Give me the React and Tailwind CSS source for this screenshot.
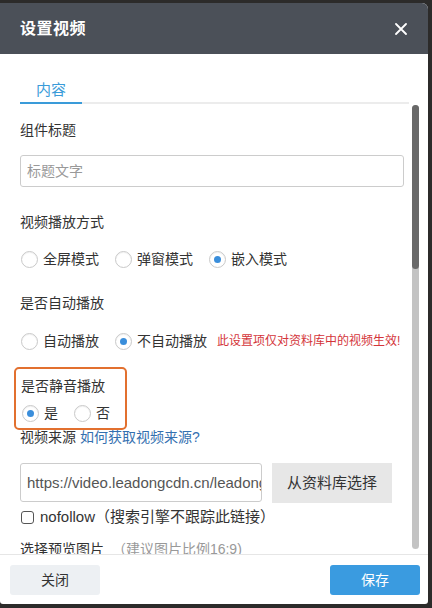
import React from "react";

const Radio = ({ checked, label }) => (
    <label className="flex items-center h-5">
        <span className="w-[17px] h-[17px] rounded-full border border-[#c9c9c9] bg-white shadow-[inset_0_1px_1px_rgba(0,0,0,0.06)] flex items-center justify-center">
            {checked && <span className="w-[7px] h-[7px] rounded-full bg-[#3a8edb]" />}
        </span>
        <span className="ml-[5px] text-sm text-[#333]">{label}</span>
    </label>
);

const App = () => {
    return (
        <div className="w-[432px] h-[608px] bg-[#2c2b2a] pt-[3px] font-['Liberation_Sans','Noto_Sans_CJK_SC',sans-serif]">
            <div className="w-[428px] h-[601px] bg-white rounded-tr-[6px] rounded-b-[3px] flex flex-col overflow-hidden">
                {/* Header */}
                <div className="h-[51px] shrink-0 bg-[#4b5058] flex items-center justify-between pl-5 pr-[21px]">
                    <h2 className="text-white text-base font-bold tracking-[0.5px]">设置视频</h2>
                    <svg width="12" height="12" viewBox="0 0 12 12" className="text-white">
                        <path d="M1 1L11 11M11 1L1 11" stroke="currentColor" strokeWidth="1.8" strokeLinecap="round" />
                    </svg>
                </div>

                {/* Tabs */}
                <div className="h-[50px] shrink-0 px-5 pt-[26px]">
                    <div className="pl-4 text-[15px] leading-5 text-[#3a9bd9]">内容</div>
                    <div className="mt-[2px] w-[389px] h-[2px] bg-[#ececec]">
                        <div className="w-[62px] h-[2px] bg-[#3a9bd9]" />
                    </div>
                </div>

                {/* Body */}
                <div className="h-[450px] shrink-0 flex overflow-hidden">
                    <div className="w-[384px] ml-5 pt-4 text-sm text-[#333]">
                        <div className="leading-5">组件标题</div>
                        <input
                            readOnly
                            placeholder="标题文字"
                            className="mt-[15px] w-full h-8 border border-[#ccc] rounded-[3px] px-[6px] text-sm outline-none placeholder:text-[#999]"
                        />

                        <div className="mt-[25px] leading-5">视频播放方式</div>
                        <div className="mt-[17px] flex gap-4 pl-[1px]">
                            <Radio label="全屏模式" />
                            <Radio label="弹窗模式" />
                            <Radio label="嵌入模式" checked />
                        </div>

                        <div className="mt-6 leading-5">是否自动播放</div>
                        <div className="mt-[18px] flex items-center pl-[1px]">
                            <Radio label="自动播放" />
                            <span className="ml-4" />
                            <Radio label="不自动播放" checked />
                            <span className="ml-[10px] text-xs text-[#d4353a]">此设置项仅对资料库中的视频生效!</span>
                        </div>

                        <div className="mt-4 -ml-[6px] w-[113px] border-2 border-[#e2702f] rounded-[5px] pl-[5px] pt-[7px] pb-[5px]">
                            <div className="leading-5">是否静音播放</div>
                            <div className="mt-[7px] flex gap-4 pl-[1px]">
                                <Radio label="是" checked />
                                <Radio label="否" />
                            </div>
                        </div>

                        <div className="-mt-[3px] leading-5">
                            视频来源 <span className="text-[#3470b0]">如何获取视频来源?</span>
                        </div>

                        <div className="mt-4 flex">
                            <input
                                readOnly
                                value="https://video.leadongcdn.cn/leadong"
                                className="w-[242px] h-[39px] border border-[#ccc] rounded-[3px] pl-[6px] text-[15px] text-[#555] outline-none"
                            />
                            <button className="ml-[10px] w-[120px] h-10 bg-[#e7e7e7] text-[15px] text-[#333]">
                                从资料库选择
                            </button>
                        </div>

                        <div className="mt-1 h-5 flex items-center">
                            <span className="ml-[1px] w-[13px] h-[13px] border border-[#555] rounded-[3px] bg-white" />
                            <span className="ml-[6px] text-[15px] text-[#333]">nofollow（搜索引擎不跟踪此链接）</span>
                        </div>

                        <div className="mt-3 leading-5">
                            选择预览图片 <span className="ml-1 text-[#999]">（建议图片比例16:9)</span>
                        </div>
                    </div>

                    {/* Scrollbar */}
                    <div className="ml-2 mt-[1px] w-[7px] h-[444px] rounded-full bg-[#c3c3c3]">
                        <div className="w-[7px] h-[164px] rounded-full bg-[#696969]" />
                    </div>
                </div>

                {/* Footer */}
                <div className="flex-1 border-t border-[#e6e6e6] flex justify-between pl-[10px] pr-2 pt-[10px]">
                    <button className="w-[90px] h-[30px] rounded-[3px] bg-[#edf0f3] text-sm text-[#333]">关闭</button>
                    <button className="w-[90px] h-[30px] rounded-[3px] bg-[#3a9be0] text-sm text-white">保存</button>
                </div>
            </div>
        </div>
    );
};

export default App;
